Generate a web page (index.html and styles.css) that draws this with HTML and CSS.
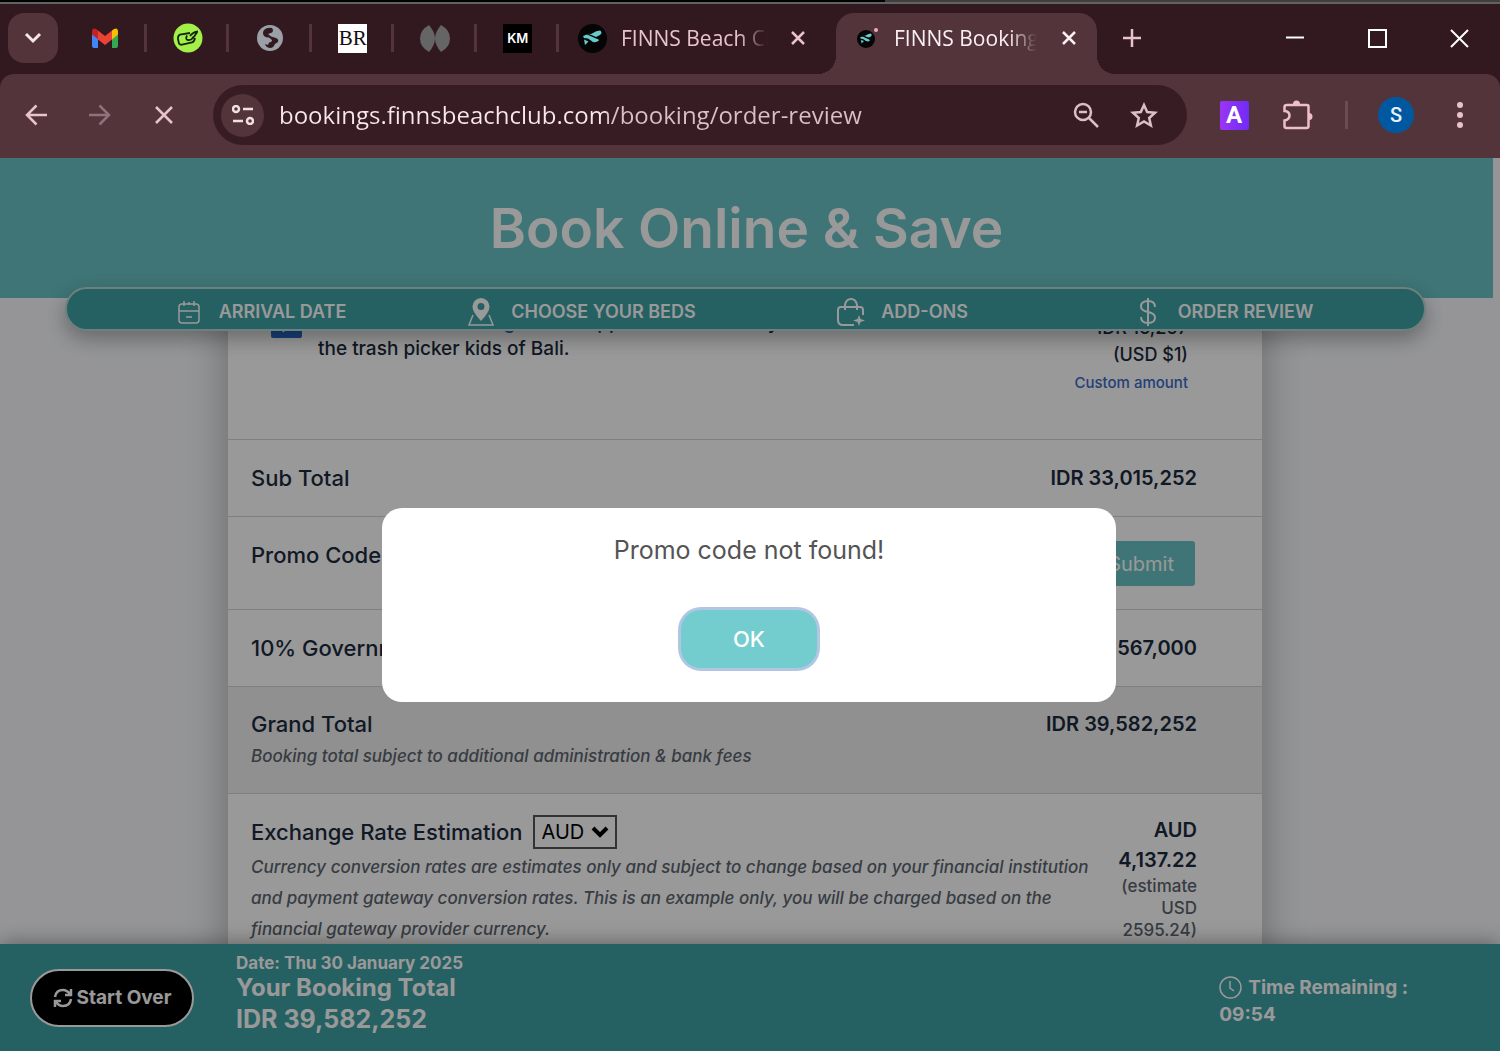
FILE: index.html
```html
<!DOCTYPE html>
<html lang="en">
<head>
  <meta charset="UTF-8">
  <meta name="viewport" content="width=device-width, initial-scale=1.0">
  <title>FINNS Booking</title>
  <link rel="stylesheet" href="styles.css">
</head>
<body>
  <!-- Browser tabs -->
  <div class="screen-edge"></div>
  <div class="tab-strip">
    <button class="tab-search" aria-label="Search tabs">
      <svg width="18" height="12" viewBox="0 0 18 12"><path d="M2 2l7 7 7-7" fill="none" stroke="#f5e6e9" stroke-width="3"/></svg>
    </button>
    <div class="pinned">
      <div class="pin">
        <svg width="26" height="20" viewBox="0 0 26 20">
          <path d="M0 4v14q0 2 2 2h4V8z" fill="#4285f4"/>
          <path d="M26 4v14q0 2-2 2h-4V8z" fill="#34a853"/>
          <path d="M20 2.500l2-1.500q4-2 4 3v2.500l-6 5z" fill="#fbbc04"/>
          <path d="M6 11L0 6.500V4q0-5 4-3l2 1.500z" fill="#c5221f"/>
          <path d="M6 2.500l7 5.500 7-5.500v9L13 17l-7-5.500z" fill="#ea4335"/>
        </svg>
      </div>
      <div class="pin">
        <svg width="30" height="30" viewBox="0 0 30 30">
          <circle cx="15" cy="15" r="14.500" fill="#a4f04a"/>
          <path d="M17 10L7 11.500Q4.500 13 5 16l1 4.500q1 1.500 3 1.200L19 19.500q2.500-1 3-4.500M14 12.500q-2 4 1 4.500t5-2l4-5.500M17 13q3-4 8-4.500M19 15l3-2" fill="none" stroke="#14250a" stroke-width="1.800"/>
        </svg>
      </div>
      <div class="pin">
        <svg width="26" height="26" viewBox="0 0 26 26">
          <circle cx="13" cy="13" r="13" fill="#9aa0a6"/>
          <path d="M15 3q-5-1-8 2-2 3 0 6 2 1.500 5 1.500l3 2.500q0 2-3 2.500l-1 2.500-3-1q1 4 6 4 3-1 4-4l3-2q1-3-2-4l-5-1.500-3-2.500 4-1.500q2-2 0-4.500z" fill="#32181f"/>
        </svg>
      </div>
      <div class="pin"><span class="fav fav-br">BR</span></div>
      <div class="pin">
        <svg width="30" height="27" viewBox="0 0 30 27">
          <path d="M9 0q6 7 6 13.500Q15 20 9 27 0 22 0 13.500 0 5 9 0z" fill="#656565"/>
          <path d="M21 0q-6 7-6 13.500Q15 20 21 27q9-5 9-13.500Q30 5 21 0z" fill="#656565"/>
        </svg>
      </div>
      <div class="pin"><span class="fav fav-km">KM</span></div>
    </div>
    <div class="tab">
      <svg width="29" height="29" viewBox="0 0 29 29">
        <circle cx="14.500" cy="14.500" r="14.500" fill="#050505"/>
        <path d="M10 9.500q3 1 5-.5 3-2.500 7-2.500 3 2 0 4.500l-4 2zM5 12l4-1.500 9 4q3 .5 3 2-3 2.500-6 1.500l-5-3.500-4-.5zM6 15.500l4.500 2L7 21z" fill="#69cbcc"/>
      </svg>
      <span class="tab-title">FINNS Beach Club</span>
      <button class="tab-close" aria-label="Close tab">
        <svg width="16" height="16" viewBox="0 0 16 16"><path d="M2 2l12 12M14 2L2 14" stroke="#e8c4ca" stroke-width="2.500"/></svg>
      </button>
    </div>
    <div class="tab tab-active">
      <svg width="22" height="22" viewBox="0 0 22 22">
        <circle cx="10" cy="12" r="9" fill="#050505"/>
        <path d="M7.500 8.500q2 .5 3-.5 2-1.500 4.500-1.500 1.500 1.500 0 3l-2.500 1zM4 10.500L6.500 9.500l5.500 2.500q2 .5 2 1.500-2 1.500-4 .5L7 12l-2.500-.5zM5 13l3 1-2.500 2.500z" fill="#69cbcc"/>
        <circle cx="20" cy="3" r="2" fill="#f5a9b8"/>
      </svg>
      <span class="tab-title">FINNS Booking</span>
      <button class="tab-close" aria-label="Close tab">
        <svg width="16" height="16" viewBox="0 0 16 16"><path d="M2 2l12 12M14 2L2 14" stroke="#fbeff1" stroke-width="2.500"/></svg>
      </button>
    </div>
    <button class="tab-new" aria-label="New tab">
      <svg width="18" height="18" viewBox="0 0 18 18"><path d="M9 0v18M0 9h18" stroke="#e8c4ca" stroke-width="2.500"/></svg>
    </button>
    <div class="window-buttons">
      <button aria-label="Minimize"><svg width="18" height="18" viewBox="0 0 18 18"><path d="M0 8.500h18" stroke="#fff" stroke-width="2"/></svg></button>
      <button aria-label="Maximize"><svg width="19" height="19" viewBox="0 0 19 19"><path d="M1 1h17v17H1z" fill="none" stroke="#fff" stroke-width="2"/></svg></button>
      <button aria-label="Close"><svg width="19" height="19" viewBox="0 0 19 19"><path d="M1 1l17 17M18 1L1 18" stroke="#fff" stroke-width="2"/></svg></button>
    </div>
  </div>

  <!-- Browser toolbar -->
  <div class="toolbar">
    <button class="tool" aria-label="Back"><svg width="22" height="22" viewBox="0 0 22 22"><path d="M22 11H2M11.500 1.500L2 11l9.500 9.500" fill="none" stroke="#e8c4ca" stroke-width="2.500"/></svg></button>
    <button class="tool" aria-label="Forward"><svg width="22" height="22" viewBox="0 0 22 22"><path d="M0 11h20M10.500 1.500L20 11l-9.500 9.500" fill="none" stroke="#91717a" stroke-width="2.500"/></svg></button>
    <button class="tool" aria-label="Stop"><svg width="18" height="18" viewBox="0 0 18 18"><path d="M1 1l16 16M17 1L1 17" stroke="#e8c4ca" stroke-width="2.500"/></svg></button>
    <div class="omnibox">
      <button class="site-info" aria-label="Site information">
        <svg width="22" height="20" viewBox="0 0 22 20" fill="none" stroke="#f1dfe2" stroke-width="2.500"><circle cx="4" cy="4" r="3"/><path d="M11 4h10M1 16h10"/><circle cx="18" cy="16" r="3"/></svg>
      </button>
      <input class="url" type="text" aria-label="Address" value="bookings.finnsbeachclub.com/booking/order-review">
      <button class="omni-btn" aria-label="Zoom"><svg width="26" height="26" viewBox="0 0 26 26" fill="none" stroke="#d8c0c4" stroke-width="2.500"><circle cx="10" cy="10" r="8"/><path d="M6 10h8M16 16l9 9"/></svg></button>
      <button class="omni-btn" aria-label="Bookmark"><svg width="28" height="26" viewBox="0 0 28 26"><path d="M14 3l3.200 7 7.800.8-5.800 5.200 1.700 7.500L14 19.500 7.100 23.500 8.800 16 3 10.800l7.800-.8z" fill="none" stroke="#d8c0c4" stroke-width="2.500"/></svg></button>
    </div>
    <button class="tool tool-ext" aria-label="Extension"><span class="ext">A</span></button>
    <button class="tool" aria-label="Extensions"><svg width="30" height="30" viewBox="0 0 30 30"><path d="M4 5h20q1.500 0 1.500 1.500V26q0 2-2 2H3.500q-2 0-2-2v-5.500q5-1 5-5t-5-4.500V7q0-2 2.500-2z" fill="none" stroke="#eebfc8" stroke-width="2.500"/><path d="M10 4a3.500 3.500 0 0 1 7 0zM26 13a3.500 3.500 0 0 1 0 7z" fill="#eebfc8"/></svg></button>
    <span class="tool-sep"></span>
    <button class="avatar" aria-label="Profile">S</button>
    <button class="tool" aria-label="Menu"><svg width="6" height="26" viewBox="0 0 6 26" fill="#e8c4ca"><circle cx="3" cy="3" r="3"/><circle cx="3" cy="13" r="3"/><circle cx="3" cy="23" r="3"/></svg></button>
  </div>

  <!-- Page -->
  <div class="page">
    <header class="hero">
      <h1>Book Online &amp; Save</h1>
      <nav class="steps">
        <a href="#">
          <svg width="28" height="24" viewBox="0 0 22 24" fill="none" stroke="#fff" stroke-width="1.500"><rect x="1" y="4" width="20" height="19" rx="3"/><path d="M1 11h20M6 1v5M11 2v3M16 1v5M8 17h6"/></svg>
          <span>ARRIVAL DATE</span>
        </a>
        <a href="#">
          <svg width="28" height="28" viewBox="0 0 26 28"><path d="M13 0a8.500 8.500 0 0 1 8.500 9q0 5-8.500 14Q4.500 14 4.500 9A8.500 8.500 0 0 1 13 0zm0 5a3.500 3.500 0 1 0 0 7 3.500 3.500 0 0 0 0-7z" fill="#fff" fill-rule="evenodd"/><path d="M5 17L1 27h24l-4-10" fill="none" stroke="#fff" stroke-width="1.500"/></svg>
          <span>CHOOSE YOUR BEDS</span>
        </a>
        <a href="#">
          <svg width="28" height="28" viewBox="0 0 28 28" fill="none" stroke="#fff" stroke-width="2"><path d="M17 27H6q-5 0-5-5V12q0-3 3-3h19q3 0 3 3v5M8 12V7q1-6 6-6t6 6v5"/><path d="M22 17l1.500 4L28 22.500l-4.500 1.500L22 28l-1.500-4-4.500-1.500 4.500-1.500z" fill="#fff" stroke="none"/></svg>
          <span>ADD-ONS</span>
        </a>
        <a href="#">
          <svg width="28" height="28" viewBox="0 0 18 28" fill="none" stroke="#fff" stroke-width="2"><path d="M16 9q0-6-7-6T2 8.500q0 4 7 5.500t7 5.500Q16 25 9 25t-7-6M9 0v28"/></svg>
          <span>ORDER REVIEW</span>
        </a>
      </nav>
    </header>

    <main class="content">
      <div class="card">
        <div class="row row-donate">
          <input type="checkbox" id="donate" checked>
          <label for="donate">Donate via <a href="#">Bali Giving</a> aid to support and care daily to<br>the trash picker kids of Bali.</label>
          <div class="donate-price">
            IDR 16,267<br>(USD $1)
            <a href="#">Custom amount</a>
          </div>
        </div>
        <div class="row">
          <span>Sub Total</span>
          <span class="amount">IDR 33,015,252</span>
        </div>
        <form class="row">
          <label for="promo">Promo Code</label>
          <div class="promo">
            <input type="text" id="promo">
            <button type="button">Submit</button>
          </div>
        </form>
        <div class="row">
          <span>10% Government Tax</span>
          <span class="amount">IDR 6,567,000</span>
        </div>
        <div class="row row-total">
          <div>
            <span>Grand Total</span>
            <p class="note">Booking total subject to additional administration &amp; bank fees</p>
          </div>
          <span class="amount">IDR 39,582,252</span>
        </div>
        <div class="row row-rate">
          <div>
            <div class="rate-head">
              <label for="currency">Exchange Rate Estimation</label>
              <span class="select">
                <select id="currency"><option>AUD</option><option>USD</option></select>
                <svg width="18" height="12" viewBox="0 0 18 12"><path d="M2 2l7 7 7-7" fill="none" stroke="#000" stroke-width="4"/></svg>
              </span>
            </div>
            <p class="note">Currency conversion rates are estimates only and subject to change based on your financial institution<br>and payment gateway conversion rates. This is an example only, you will be charged based on the<br>financial gateway provider currency.</p>
          </div>
          <div class="amount rate-value">
            AUD<br>4,137.22
            <small>(estimate<br>USD<br>2595.24)</small>
          </div>
        </div>
      </div>
    </main>

    <footer class="summary">
      <button class="start-over">
        <svg width="20" height="20" viewBox="0 0 20 20" fill="none" stroke="#fff" stroke-width="2.500"><path d="M2 9q1-7 8-7 4 0 7 4M18 11q-1 7-8 7-4 0-7-4M18 1v6h-6M2 19v-6h6"/></svg>
        Start Over
      </button>
      <div class="booking">
        <div class="booking-date">Date: Thu 30 January 2025</div>
        <div class="booking-label">Your Booking Total</div>
        <div class="booking-total">IDR 39,582,252</div>
      </div>
      <div class="timer">
        <div class="timer-label">
          <svg width="23" height="23" viewBox="0 0 23 23" fill="none" stroke="#fff" stroke-width="1.500"><circle cx="11.500" cy="11.500" r="10.500"/><path d="M11 5v7l4 3"/></svg>
          Time Remaining :
        </div>
        <div class="timer-value">09:54</div>
      </div>
    </footer>

    <div class="overlay">
      <div class="modal" role="dialog" aria-labelledby="modal-text">
        <p id="modal-text">Promo code not found!</p>
        <button>OK</button>
      </div>
    </div>
  </div>
</body>
</html>
```
FILE: styles.css
```css
* {
  box-sizing: border-box;
}
body {
  margin: 0;
  height: 100vh;
  display: flex;
  flex-direction: column;
  overflow: hidden;
  background: #32181f;
  font-family: Inter, "Open Sans", sans-serif;
}
button {
  font-family: inherit;
  border: none;
  background: none;
  padding: 0;
  display: flex;
  align-items: center;
  justify-content: center;
  cursor: pointer;
}
svg {
  flex-shrink: 0;
}
p, h1 {
  margin: 0;
}

/* browser tabs */
.screen-edge {
  height: 4px;
  flex-shrink: 0;
  background: linear-gradient(90deg, #000 59%, #463c3e 59%);
  border-bottom: 2px solid #5b6562;
}
.tab-strip {
  display: flex;
  height: 70px;
  padding: 9px 0 0 8px;
  flex-shrink: 0;
  font-family: "Open Sans", sans-serif;
}
.tab-search {
  width: 50px;
  height: 50px;
  border-radius: 16px;
  background: #52343a;
}
.pinned {
  display: grid;
  grid-template-columns: repeat(6, 1fr);
  width: 495px;
  margin-left: 6px;
  height: 50px;
}
.pin {
  display: flex;
  align-items: center;
  justify-content: center;
  position: relative;
}
.pin::after {
  content: "";
  position: absolute;
  right: 0;
  top: 11px;
  width: 3px;
  height: 28px;
  background: #52343a;
}
.fav {
  width: 29px;
  height: 29px;
  display: flex;
  align-items: center;
  justify-content: center;
}
.fav-br {
  background: #fff;
  color: #111;
  font: 21px "Liberation Serif", serif;
}
.fav-km {
  background: #000;
  color: #fff;
  font: 600 13px Inter, sans-serif;
}
.tab {
  display: flex;
  align-items: center;
  width: 277px;
  height: 50px;
  padding: 0 30px 0 19px;
  gap: 14px;
  color: #e8c4ca;
}
.tab-title {
  flex: 1;
  font-size: 21px;
  line-height: 32px;
  white-space: nowrap;
  overflow: hidden;
  -webkit-mask-image: linear-gradient(90deg, #000 80%, transparent);
  mask-image: linear-gradient(90deg, #000 80%, transparent);
}
.tab-close {
  width: 16px;
  height: 16px;
  margin-left: 8px;
}
.tab-active {
  position: relative;
  width: 261px;
  height: 61px;
  padding: 0 20px 11px;
  gap: 16px;
  background: #52343a;
  border-radius: 18px 18px 0 0;
  color: #fbeff1;
}
.tab-active::before,
.tab-active::after {
  content: "";
  position: absolute;
  bottom: 0;
  width: 18px;
  height: 18px;
}
.tab-active::before {
  right: 100%;
  background: radial-gradient(circle at 0 0, transparent 18px, #52343a 18px);
}
.tab-active::after {
  left: 100%;
  background: radial-gradient(circle at 100% 0, transparent 18px, #52343a 18px);
}
.tab-new {
  width: 50px;
  height: 50px;
  margin-left: 10px;
}
.window-buttons {
  display: flex;
  height: 50px;
  margin-left: auto;
}
.window-buttons button {
  width: 82px;
}

/* browser toolbar */
.toolbar {
  display: flex;
  align-items: center;
  height: 84px;
  padding: 0 8px 2px 4px;
  flex-shrink: 0;
  background: #52343a;
  border-radius: 14px 14px 0 0;
}
.tool {
  width: 64px;
  height: 60px;
}
.omnibox {
  flex: 1;
  display: flex;
  align-items: center;
  height: 60px;
  margin-left: 17px;
  padding: 0 14px 0 8px;
  border-radius: 30px;
  background: #371d23;
}
.site-info {
  width: 43px;
  height: 43px;
  border-radius: 50%;
  background: #52343a;
}
.url {
  flex: 1;
  min-width: 0;
  margin-left: 15px;
  padding: 0;
  border: none;
  outline: none;
  font: 24px/34px "Open Sans", sans-serif;
  color: transparent;
  background: linear-gradient(90deg, #f8e8ea 327px, #d8c0c4 327px);
  -webkit-background-clip: text;
  background-clip: text;
}
.omni-btn {
  width: 58px;
  height: 58px;
}
.tool-ext {
  margin-left: 15px;
}
.ext {
  width: 29px;
  height: 29px;
  border-radius: 2px;
  background: linear-gradient(90deg, #9b35f5, #6f2cf5);
  color: #fff;
  font: 700 24px/29px Roboto, sans-serif;
}
.tool-sep {
  width: 3px;
  height: 28px;
  margin: 0 30px 0 15px;
  background: #6d4b52;
}
.avatar {
  width: 36px;
  height: 36px;
  margin-right: 14px;
  border-radius: 50%;
  background: #0059a0;
  color: #e6f0fa;
  font: 500 20px Roboto, sans-serif;
}

/* page */
.page {
  position: relative;
  flex: 1;
  min-height: 0;
  display: flex;
  flex-direction: column;
  background: #f8f9fc;
  color: #1b2a3c;
}
.hero {
  position: relative;
  z-index: 1;
  height: 140px;
  flex-shrink: 0;
  margin-right: 7px;
  background: #69c3c5;
  text-align: center;
}
.hero h1 {
  font-size: 55px;
  font-weight: 600;
  line-height: 140px;
  color: #fff;
}
.steps {
  position: absolute;
  left: 65px;
  right: 67px;
  bottom: -33px;
  height: 44px;
  display: grid;
  grid-template-columns: repeat(4, 1fr);
  padding: 0 40px 0 33px;
  background: #3ea0a3;
  border: 2px solid #b4d5d6;
  border-radius: 22px;
  box-shadow: 0 8px 20px rgba(0, 0, 0, 0.3);
}
.steps a {
  display: flex;
  align-items: center;
  justify-content: center;
  gap: 16px;
  padding-top: 5px;
  color: #fff;
  font-size: 18px;
  font-weight: 600;
  text-decoration: none;
}
.content {
  flex: 1;
  min-height: 0;
  overflow: hidden;
  margin-right: 7px;
  padding: 0 231px 0 228px;
}
.card {
  background: #fff;
  box-shadow: 0 0 40px rgba(0, 0, 0, 0.3);
}
.row {
  display: flex;
  justify-content: space-between;
  align-items: flex-start;
  padding: 22px 65px 21px 23px;
  border-bottom: 1px solid #d4d4d4;
  font-size: 22px;
  font-weight: 500;
  line-height: 33px;
}
.row a {
  color: #3a6bc8;
  text-decoration: none;
}
.amount {
  font-size: 20px;
  font-weight: 600;
}
.row-donate {
  min-height: 142px;
  padding: 12px 74px 15px 43px;
  gap: 16px;
  font-size: 19px;
  line-height: 26px;
}
.row-donate input {
  width: 31px;
  height: 31px;
  margin: -3px 0 0;
  accent-color: #2a6ac8;
}
.row-donate label {
  flex: 1;
}
.donate-price {
  padding-top: 4px;
  text-align: right;
  font-size: 18px;
  line-height: 27px;
}
.donate-price a {
  display: block;
  font-size: 15px;
  line-height: 30px;
}
.promo {
  display: flex;
  gap: 12px;
  padding: 2px 2px 2px 0;
}
.promo input {
  width: 320px;
  border: 1px solid #aaa;
}
.promo button {
  height: 45px;
  padding: 0 21px;
  border-radius: 3px;
  background: #69c3c5;
  color: #fff;
  font-size: 20px;
}
.row-total {
  padding-top: 21px;
  background: #f0f0f0;
}
.note {
  font-size: 17px;
  font-style: italic;
  line-height: 31px;
  white-space: nowrap;
  color: #5d656f;
}
.row-rate {
  padding-top: 21px;
}
.rate-head {
  display: flex;
  align-items: center;
  gap: 10px;
  height: 34px;
  margin-bottom: 3px;
}
.select {
  position: relative;
}
.select select {
  appearance: none;
  display: block;
  width: 84px;
  height: 34px;
  padding: 0 7px;
  border: 2px solid #555;
  border-radius: 0;
  background: transparent;
  color: #000;
  font: 20px Inter, sans-serif;
}
.select svg {
  position: absolute;
  right: 8px;
  top: 11px;
  pointer-events: none;
}
.rate-value {
  text-align: right;
  line-height: 30px;
}
.rate-value small {
  display: block;
  font-size: 17px;
  font-weight: 500;
  line-height: 22px;
  color: #5d656f;
}

/* booking summary bar */
.summary {
  position: relative;
  display: flex;
  align-items: center;
  height: 107px;
  flex-shrink: 0;
  padding: 0 92px 0 30px;
  background: #3ea0a3;
  color: #fff;
  font-weight: 700;
  box-shadow: 0 0 20px rgba(0, 0, 0, 0.4);
}
.start-over {
  width: 164px;
  height: 58px;
  gap: 4px;
  border: 2px solid #fff;
  border-radius: 29px;
  background: #000;
  color: #fff;
  font-size: 19px;
  font-weight: 700;
}
.booking {
  margin-left: 42px;
  padding-bottom: 8px;
}
.booking-date {
  font-size: 17px;
  line-height: 20px;
}
.booking-label {
  font-size: 24px;
  line-height: 30px;
}
.booking-total {
  font-size: 25px;
  line-height: 32px;
}
.timer {
  margin-left: auto;
  padding-top: 6px;
  font-size: 19px;
  line-height: 27px;
}
.timer-label {
  display: flex;
  align-items: center;
  gap: 6px;
}

/* alert */
.overlay {
  position: absolute;
  inset: 0;
  z-index: 2;
  display: flex;
  align-items: center;
  justify-content: center;
  padding-right: 2px;
  background: rgba(0, 0, 0, 0.4);
}
.modal {
  display: flex;
  flex-direction: column;
  align-items: center;
  width: 49%;
  padding: 24px 24px 34px;
  background: #fff;
  border-radius: 20px;
  text-align: center;
}
.modal p {
  font-size: 25px;
  line-height: 36px;
  color: #545454;
}
.modal button {
  width: 136px;
  height: 58px;
  margin-top: 42px;
  border-radius: 20px;
  background: #73cccd;
  box-shadow: 0 0 0 3px #b0c6e3;
  color: #fff;
  font-size: 22px;
  font-weight: 500;
}
```
